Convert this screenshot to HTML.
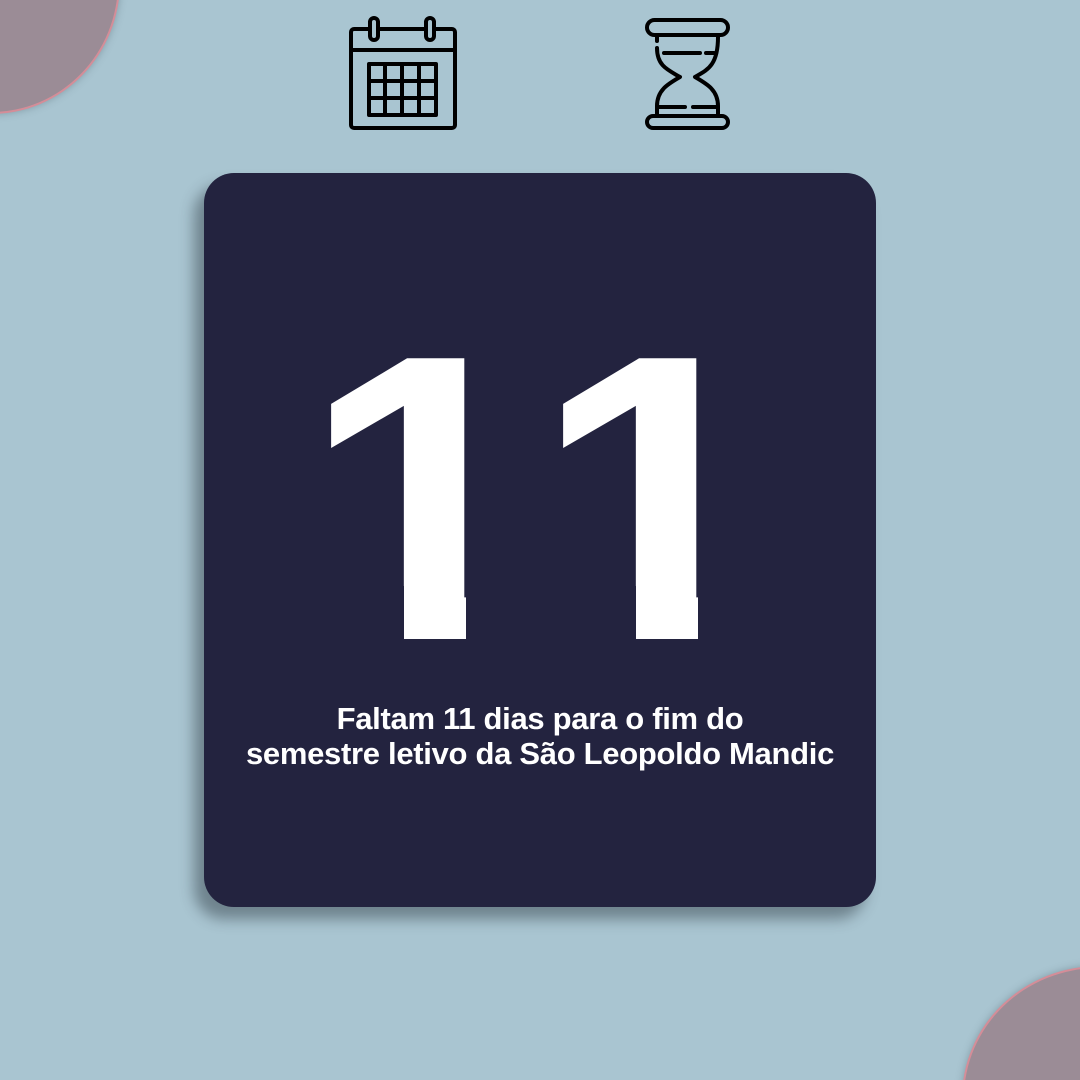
<!DOCTYPE html>
<html><head><meta charset="utf-8"><style>
html,body{margin:0;padding:0;width:1080px;height:1080px;overflow:hidden}
#w{width:1080px;height:1080px;background:#a9c5d1;position:relative;overflow:hidden;font-family:"Liberation Sans",sans-serif}
.c{position:absolute;border-radius:50%;background:#9b8c96;border:2px solid #d48d98;box-shadow:0 0 8px rgba(60,80,90,.35)}
.card{position:absolute;left:204px;top:173px;width:672px;height:734px;background:#23233f;border-radius:30px;box-shadow:-10px 12px 14px rgba(40,50,60,.45)}
.d{position:absolute;top:295px;color:#fff;font-weight:bold;font-size:408px;line-height:408px;transform:scaleX(1.08);transform-origin:0 0}
.m{position:absolute;background:#23233f;top:586px;height:60px}
.t{position:absolute;left:0;width:1080px;top:701px;text-align:center;color:#fff;font-weight:bold;font-size:31px;line-height:35px;letter-spacing:-0.3px}
</style></head><body><div id="w">
<div class="c" style="left:-138px;top:-150px;width:254px;height:260px"></div>
<div class="c" style="left:962px;top:966px;width:270px;height:260px"></div>
<svg style="position:absolute;left:0;top:0" width="1080" height="140" fill="none" stroke="#000" stroke-width="4" stroke-linecap="round" stroke-linejoin="round">
<rect x="351" y="29" width="104" height="99" rx="3"/>
<line x1="351" y1="50" x2="455" y2="50"/>
<rect x="370" y="18" width="8" height="22" rx="4" fill="#a9c5d1"/>
<rect x="426" y="18" width="8" height="22" rx="4" fill="#a9c5d1"/>
<rect x="369" y="64" width="67" height="51" fill="#a9c5d1"/>
<path d="M385 64V115M402 64V115M419 64V115M369 81H436M369 98H436"/>
<rect x="647" y="20" width="81" height="15" rx="7.5"/>
<rect x="647" y="116" width="81" height="12" rx="6"/>
<path d="M657 48C657 66 668 70 680 77C668 84 657 90 657 106V116M718 37C718 66 707 70 695 77C707 84 718 90 718 106V116"/>
<path d="M657 36V41"/>
<path d="M664 53H700M706 53H714"/>
<path d="M659 107H685M693 107H716"/>
</svg>
<div class="card"></div>
<div class="d" style="left:301px">1</div>
<div class="d" style="left:533px">1</div>
<div class="m" style="left:290px;width:114px"></div>
<div class="m" style="left:466px;width:60px"></div>
<div class="m" style="left:522px;width:114px"></div>
<div class="m" style="left:698px;width:80px"></div>
<div class="t">Faltam 11 dias para o fim do<br>semestre letivo da São Leopoldo Mandic</div>
</div></body></html>
